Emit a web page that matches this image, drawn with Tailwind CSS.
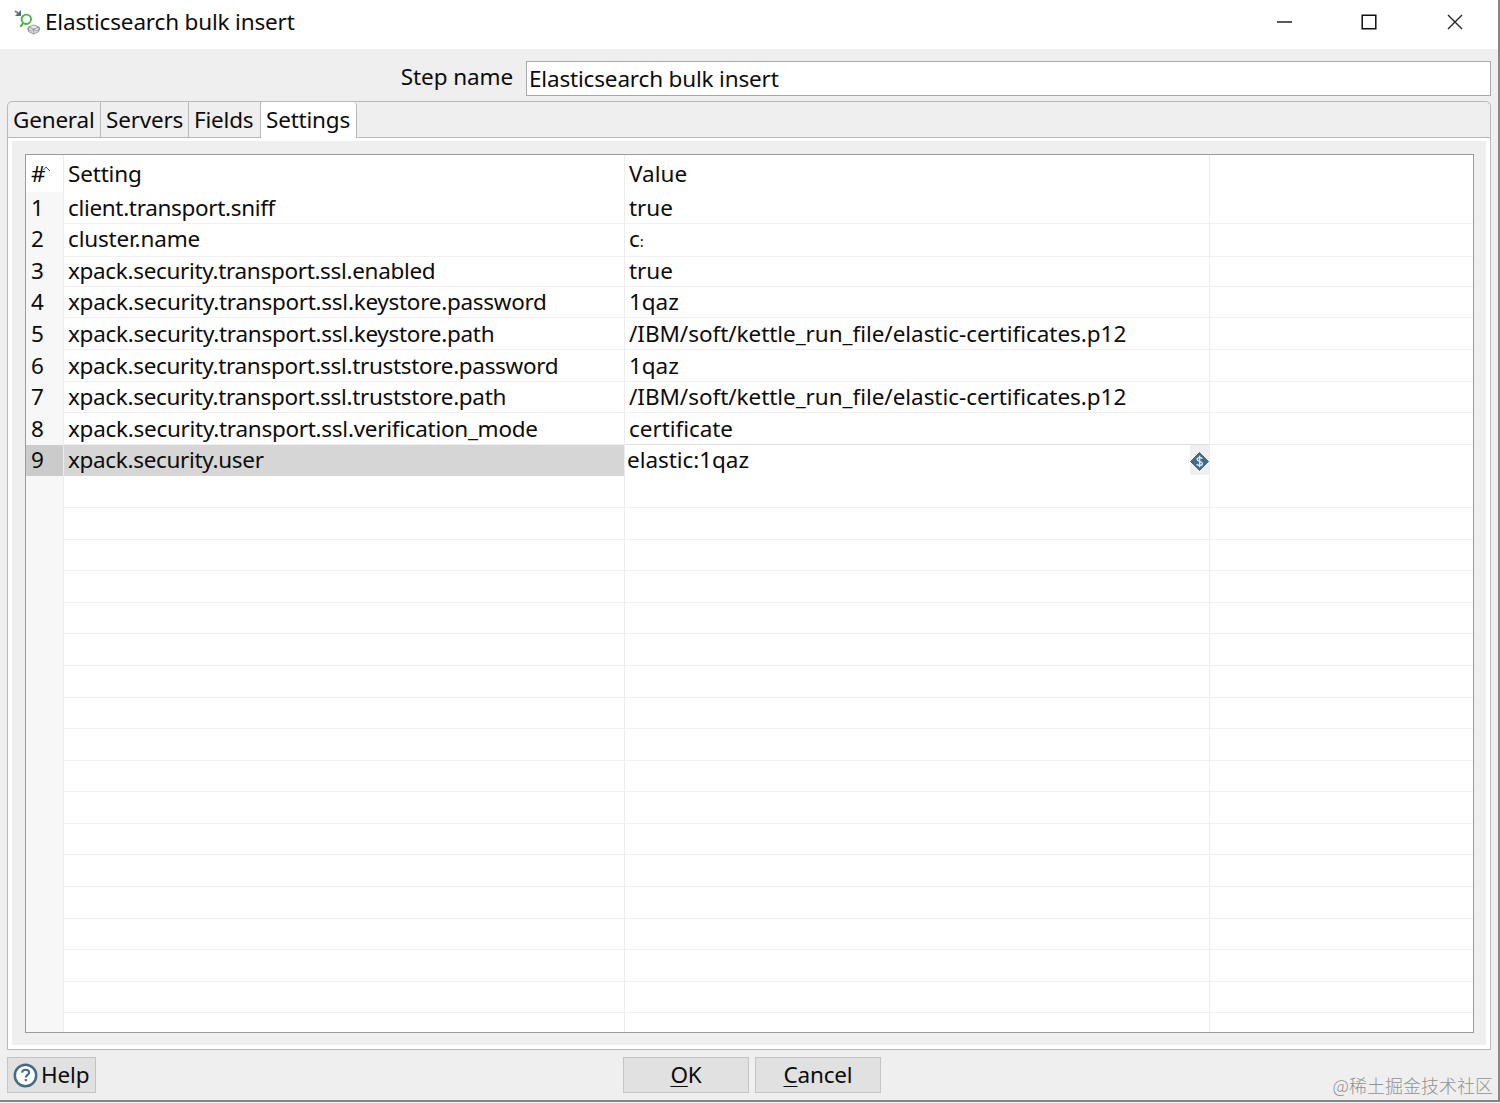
<!DOCTYPE html>
<html lang="en">
<head>
<meta charset="utf-8">
<title>Elasticsearch bulk insert</title>
<script src="https://cdn.jsdelivr.net/npm/@tailwindcss/browser@4"></script>
</head>
<body class="bg-[#f5f5f5]">
<div class="flex h-[1102px] w-[1500px] flex-col overflow-hidden border-r-2 border-b-2 border-[#858585] bg-[#efefef] font-['Noto_Sans',sans-serif] text-[22.5px] leading-[30px] tracking-[-0.17px] whitespace-nowrap text-[#0c0c0c]">
  <header class="flex h-[49px] shrink-0 items-start bg-white pl-[14px]">
    <svg class="mt-[9px] h-[27px] w-[27px]" viewBox="0 0 27 27" fill="none">
      <path d="M1 2l4 3" stroke="#6c8795" stroke-width="2"/><path d="M7 1v6H1z" fill="#546f7c"/>
      <circle cx="12.3" cy="10.3" r="4.7" stroke="#45ba48" stroke-width="1.9"/><path d="M9 14.2l-2.6 3.6" stroke="#45ba48" stroke-width="2.1"/>
      <path d="M14.5 18l5-2 5.500 2-5.300 2.200zM14.500 18v4.500l5.200 2.500 5.300-2.500V18M19.700 20.200V25M14.500 18l-1 2.300 4 1.700 2.200-1.800 2.200 1.800 4-1.700-1-2.300" stroke="#8b9090" stroke-width=".9" fill="#e8eaea"/>
    </svg>
    <h1 class="mt-[7px] ml-[4px]">Elasticsearch bulk insert</h1>
    <div class="ml-auto flex items-center pt-[14px] pr-[35px]">
      <svg class="h-4 w-4" viewBox="0 0 16 16"><path d="M1 8h15" stroke="#222" stroke-width="1.5"/></svg>
      <svg class="ml-[69px] h-4 w-4" viewBox="0 0 16 16"><path d="M1.200 1.200h13.600v13.600H1.200z" fill="none" stroke="#111" stroke-width="1.500"/></svg>
      <svg class="ml-[70px] h-4 w-4" viewBox="0 0 16 16"><path d="M1 1l14 14M15 1L1 15" stroke="#222" stroke-width="1.400"/></svg>
    </div>
  </header>

  <div class="flex h-[52px] shrink-0 pt-[12px]">
    <label class="w-[526px] pt-px pr-[13px] text-right tracking-[-0.1px]">Step name</label>
    <div class="h-[35px] w-[965px] border border-[#a8a8a8] bg-white pt-[2px] pl-[2px]">Elasticsearch bulk insert</div>
  </div>

  <main class="ml-[7px] flex h-[949px] w-[1484px] shrink-0 flex-col rounded-t-[5px] border border-[#b9b9b9]">
    <nav class="flex h-[36px] shrink-0 tracking-[-0.2px]">
      <div class="w-[93px] border-r border-b border-[#b9b9b9] pt-[3px] pl-[5px]">General</div>
      <div class="w-[88px] border-r border-b border-[#b9b9b9] pt-[3px] pl-[5px]">Servers</div>
      <div class="w-[72px] border-r border-b border-[#b9b9b9] pt-[3px] pl-[5px]">Fields</div>
      <div class="w-[96px] rounded-t-[4px] border-r border-[#b9b9b9] bg-white pt-[3px] pl-[5px]">Settings</div>
      <div class="grow border-b border-[#b9b9b9]"></div>
    </nav>
    <section class="grow border-[4px] border-t-[3px] border-white px-[13px] pt-[13px]">
      <div class="h-[879px] w-[1449px] overflow-hidden border border-[#9c9c9c] bg-white">
        <div class="relative grid h-[37px] grid-cols-[38px_561px_585px_263px]">
          <div class="border-r border-[#ececec] pt-[4px] pl-[5px]">#</div>
          <div class="border-r border-[#ececec] pt-[4px] pl-[4px]">Setting</div>
          <div class="border-r border-[#ececec] pt-[4px] pl-[4px] tracking-normal">Value</div>
          <svg class="absolute top-[11px] left-[17px] h-[6px] w-[8px]" viewBox="0 0 8 6"><path d="M.5 4L3 1l4 4" fill="none" stroke="#555" stroke-width="1"/></svg>
        </div>
        <div id="rows"></div>
      </div>
    </section>
  </main>

  <footer class="relative flex h-[50px] shrink-0 pt-[7px]">
    <button class="ml-[7px] flex h-[36px] w-[89px] items-center border border-[#c4c4c4] bg-[#e1e1e1] pl-[5px]">
      <svg class="h-[25px] w-[25px]" viewBox="0 0 25 25" fill="none"><circle cx="12.500" cy="12.500" r="10.700" fill="#fff" stroke="#426b87" stroke-width="2.500"/><path d="M9 9.700c.3-2.200 1.800-3 3.600-3 2 0 3.500 1 3.500 2.900 0 2.400-3.300 2.300-3.300 5M12.800 16v2.300" stroke="#426b87" stroke-width="2.100"/></svg>
      <span class="ml-[3px]">Help</span>
    </button>
    <button class="ml-[527px] h-[36px] w-[126px] border border-[#c4c4c4] bg-[#e1e1e1]"><span class="underline decoration-1 underline-offset-[3px]">O</span>K</button>
    <button class="ml-[6px] h-[36px] w-[126px] border border-[#c4c4c4] bg-[#e1e1e1]"><span class="underline decoration-1 underline-offset-[3px]">C</span>ancel</button>
    <div class="absolute right-[5px] bottom-0 font-['Noto_Sans_CJK_SC',sans-serif] text-[18px] font-light tracking-normal text-[#929292]">@稀土掘金技术社区</div>
  </footer>
</div>
<script>
const data = [
  ['client.transport.sniff', 'true'],
  ['cluster.name', 'c:'],
  ['xpack.security.transport.ssl.enabled', 'true'],
  ['xpack.security.transport.ssl.keystore.password', '1qaz'],
  ['xpack.security.transport.ssl.keystore.path', '/IBM/soft/kettle_run_file/elastic-certificates.p12'],
  ['xpack.security.transport.ssl.truststore.password', '1qaz'],
  ['xpack.security.transport.ssl.truststore.path', '/IBM/soft/kettle_run_file/elastic-certificates.p12'],
  ['xpack.security.transport.ssl.verification_mode', 'certificate'],
  ['xpack.security.user', 'elastic:1qaz'],
];
const variableIcon = '<svg class="h-[19px] w-[19px]" viewBox="0 0 19 19"><path d="M9.500 .5L18.500 9.500 9.500 18.500 .5 9.500z" fill="#426b87" stroke="#426b87" stroke-linejoin="round"/><path d="M12.300 6.700C11.500 5.200 7 5 7 7.300c0 2.500 5.400 1.500 5.400 4.200 0 2.500-4.700 2.400-5.700.7M9.600 3.800v11.400" fill="none" stroke="#dce5eb" stroke-width="1.400"/></svg>';
let html = '';
for (let i = 0; i < 27; i++) {
  const [setting, value] = data[i] || ['', ''];
  const selected = i === 8;
  const line = selected ? 'border-b-transparent' : i === 7 ? 'border-b-[#dedede]' : 'border-b-[#f0f0f0]';
  const tracking = i === 1 ? '' : [3, 4, 7].includes(i) ? 'tracking-[-0.28px]' : 'tracking-[-0.33px]';
  html += `<div class="grid h-[31.6px] grid-cols-[38px_561px_585px_263px]">
    <div class="border-r border-[#ececec] pt-[0.6px] pl-[5px] ${selected ? 'bg-[#cbcbcb]' : 'bg-[#f7f7f7]'}">${data[i] ? i + 1 : ''}</div>
    <div class="border-r border-b border-r-[#ececec] pt-[0.6px] pl-[4px] ${tracking} ${selected ? 'bg-[#d6d6d6] border-b-[#d6d6d6]' : 'border-b-[#f0f0f0]'}">${setting}</div>
    <div class="flex justify-between border-r border-b border-r-[#ececec] tracking-[-0.05px] ${line} ${selected ? 'pl-[2px]' : 'pt-[0.6px] pl-[4px]'}">${i === 1 ? '<span>c<span class="text-[15px]">:</span></span>' : `<span>${value}</span>`}${selected ? `<span class="flex w-[19px] items-center bg-[#f0f0f0] pt-[2px]">${variableIcon}</span>` : ''}</div>
    <div class="border-b ${selected ? 'border-transparent' : 'border-[#f0f0f0]'}"></div>
  </div>`;
}
document.getElementById('rows').innerHTML = html;
</script>
</body>
</html>
